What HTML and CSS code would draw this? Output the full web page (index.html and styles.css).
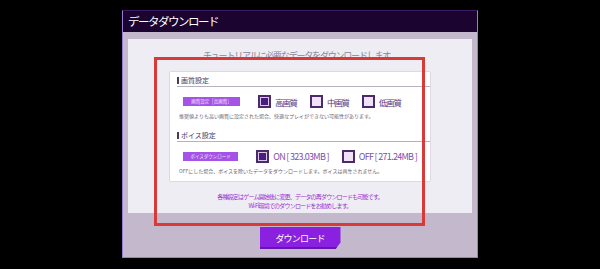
FILE: index.html
```html
<!DOCTYPE html>
<html lang="ja">
  <head>
    <meta charset="UTF-8" />
    <title>データダウンロード</title>
    <link rel="stylesheet" href="styles.css">
  </head>
  <body>
    <div class="dialog">
      <div class="title">データダウンロード</div>
      <div class="dialog-body">
        <div class="panel">
          <p class="lead">チュートリアルに必要なデータをダウンロードします。</p>
          <div class="card">
            <div class="section-head">画質設定</div>
            <div class="option-row">
              <span class="tag">画質設定［高画質］</span>
              <span class="option checked"><span class="box"></span><span class="label">高画質</span></span>
              <span class="option"><span class="box"></span><span class="label">中画質</span></span>
              <span class="option"><span class="box"></span><span class="label">低画質</span></span>
            </div>
            <p class="note">推奨値よりも高い画質に設定された場合、快適なプレイができない可能性があります。</p>

            <div class="section-head second">ボイス設定</div>
            <div class="option-row">
              <span class="tag">ボイスダウンロード</span>
              <span class="option checked"><span class="box"></span><span class="label size">ON [ 323.03MB ]</span></span>
              <span class="option"><span class="box"></span><span class="label size">OFF [ 271.24MB ]</span></span>
            </div>
            <p class="note">OFFにした場合、ボイスを除いたデータをダウンロードします。ボイスは再生されません。</p>
          </div>
          <p class="info">各種設定はゲーム開始後に変更、データの再ダウンロードも可能です。<br>Wi-Fi環境でのダウンロードをお勧めします。</p>
        </div>
        <div class="footer">
          <button class="download-btn">ダウンロード</button>
        </div>
      </div>
      <div class="highlight"></div>
    </div>
  </body>
</html>
```

FILE: styles.css
```css
body {
  margin: 0;
  padding: 0;
  background: #000;
  font-family: "Noto Sans CJK JP", "Noto Sans", sans-serif;
}

.dialog {
  position: relative;
  width: 354px;
  margin: 10px auto 0;
  border: 1px solid #9b7bd8;
  border-top-color: #3a1a60;
}

.title {
  height: 21px;
  line-height: 21px;
  padding-left: 5px;
  background: #1b0530;
  color: #fff;
  font-size: 11.5px;
  letter-spacing: -1.5px;
}

.dialog-body {
  background: #c4b8cd;
  padding: 7px 5px 0;
}

.panel {
  background: #efedf4;
  padding: 11px 0 1px;
  height: 162px;
}

.lead {
  margin: 0;
  text-align: center;
  font-size: 9px;
  line-height: 12px;
  letter-spacing: -1.2px;
  color: #8a8494;
}

.card {
  margin: 9px 0 0 41px;
  width: 262px;
  height: 111px;
  box-sizing: border-box;
  background: #fff;
  border: 1px solid #ddd8e2;
  border-radius: 2px;
  padding: 3px 0 0 0;
}

.section-head {
  margin-left: 7px;
  height: 11px;
  line-height: 11px;
  font-size: 7px;
  color: #4a3a5a;
  border-bottom: 1px solid #b8b0c0;
  display: flex;
  align-items: center;
  gap: 2px;
}

.section-head::before {
  content: "";
  width: 2px;
  height: 7px;
  background: #4a3a5a;
}

.section-head.second {
  margin-top: 10px;
}

.option-row {
  display: flex;
  align-items: center;
  height: 13px;
  margin-top: 8px;
  padding-left: 13px;
  white-space: nowrap;
}

.tag {
  width: 57px;
  height: 9px;
  line-height: 9px;
  background: #a552e6;
  color: #f4e8ff;
  font-size: 4.5px;
  text-align: center;
  margin-right: 18px;
}

.option {
  display: flex;
  align-items: center;
  margin-right: 13px;
}

.box {
  flex: none;
  width: 9px;
  height: 9px;
  border: 2px solid #4a2a6a;
  background: #f0e2f6;
  margin-right: 4px;
}

.option.checked .box {
  background: #4c1b82;
  box-shadow: inset 0 0 0 1px #d6c8e6;
}

.label {
  font-size: 8.5px;
  letter-spacing: -1.2px;
  color: #5a3676;
}

.label.size {
  font-size: 9px;
  letter-spacing: -0.7px;
  color: #7b4fae;
}

.note {
  margin: 4px 0 0 9px;
  font-size: 5px;
  line-height: 8px;
  color: #6a6270;
  white-space: nowrap;
}

.info {
  margin: 10px 0 0;
  text-align: center;
  font-size: 6px;
  line-height: 9px;
  letter-spacing: -0.8px;
  color: #9b30d0;
}

.footer {
  display: flex;
  justify-content: center;
  padding: 14px 0 8px;
}

.download-btn {
  width: 81px;
  height: 22px;
  border: none;
  padding: 0;
  background: #8b21e0;
  color: #fff;
  font-family: inherit;
  font-size: 9px;
  letter-spacing: -0.8px;
  clip-path: polygon(0 0, 100% 0, 100% 70%, 94% 100%, 0 100%);
  box-shadow: inset 0 -2px 0 #6a14b0;
}

.highlight {
  position: absolute;
  left: 31px;
  top: 46px;
  width: 265px;
  height: 163px;
  border: 3px solid #d83a3a;
}
```
